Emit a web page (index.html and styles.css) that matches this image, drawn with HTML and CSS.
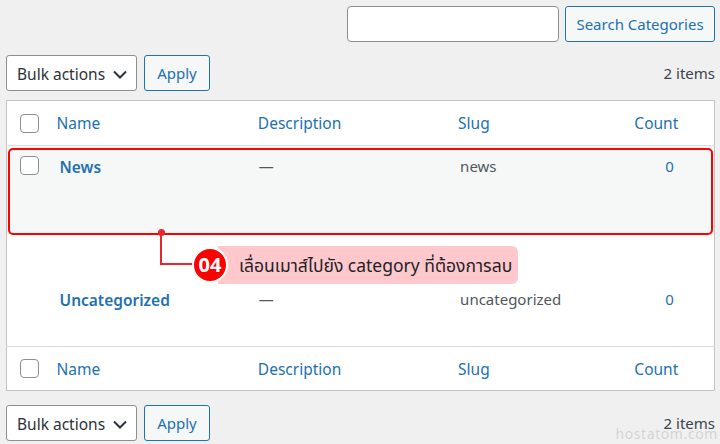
FILE: index.html
```html
<!DOCTYPE html>
<html lang="en">
<head>
<meta charset="utf-8">
<title>Categories</title>
<link rel="stylesheet" href="styles.css">
</head>
<body>
<div class="page">
  <div class="search-row">
    <input class="search-input" type="text" aria-label="Search">
    <button class="btn">Search Categories</button>
  </div>

  <div class="tablenav">
    <div class="select">Bulk actions
      <svg class="chev" width="14" height="14" viewBox="0 0 14 14"><path d="M1 4.5l6 6 6-6" fill="none" stroke="#2c3338" stroke-width="2"/></svg>
    </div>
    <button class="btn apply">Apply</button>
    <span class="count">2 items</span>
  </div>

  <table class="list">
    <colgroup>
      <col class="c-cb"><col class="c-name"><col class="c-desc"><col class="c-slug"><col class="c-count">
    </colgroup>
    <thead>
      <tr class="head">
        <th><span class="cb"></span></th>
        <th class="h">Name</th>
        <th class="h">Description</th>
        <th class="h">Slug</th>
        <th class="h hc">Count</th>
      </tr>
    </thead>
    <tbody>
      <tr class="row r1">
        <td><span class="cb"></span></td>
        <td class="name">News</td>
        <td class="dash">—</td>
        <td class="slug">news</td>
        <td class="num">0</td>
      </tr>
      <tr class="row r2">
        <td></td>
        <td class="name">Uncategorized</td>
        <td class="dash">—</td>
        <td class="slug">uncategorized</td>
        <td class="num">0</td>
      </tr>
    </tbody>
    <tfoot>
      <tr class="foot">
        <th><span class="cb"></span></th>
        <th class="h">Name</th>
        <th class="h">Description</th>
        <th class="h">Slug</th>
        <th class="h hc">Count</th>
      </tr>
    </tfoot>
  </table>

  <div class="tablenav bottom">
    <div class="select">Bulk actions
      <svg class="chev" width="14" height="14" viewBox="0 0 14 14"><path d="M1 4.5l6 6 6-6" fill="none" stroke="#2c3338" stroke-width="2"/></svg>
    </div>
    <button class="btn apply">Apply</button>
    <span class="count">2 items</span>
  </div>

  <div class="highlight"></div>
  <div class="callout">
    <span class="dot"></span>
    <span class="vline"></span>
    <span class="hline"></span>
    <span class="label">เลื่อนเมาส์ไปยัง category ที่ต้องการลบ</span>
    <span class="badge">04</span>
  </div>
  <div class="watermark">hostatom.com</div>
</div>
</body>
</html>
```

FILE: styles.css
```css
* { box-sizing: border-box; }
html, body { margin: 0; }
body {
  background: #f0f0f1;
  font-family: "Noto Sans", "Open Sans", sans-serif;
  font-size: 15px;
  color: #3c434a;
  width: 720px;
  height: 444px;
  overflow: hidden;
}
.page {
  position: relative;
  padding: 6px 5px 0 6px;
  height: 444px;
}
.search-row {
  display: flex;
  justify-content: flex-end;
  gap: 6px;
}
.search-input {
  width: 212px;
  height: 36px;
  border: 1px solid #8c8f94;
  border-radius: 4px;
  background: #fff;
  margin: 0;
}
.btn {
  height: 36px;
  padding: 0 12px;
  border: 1px solid #2271b1;
  border-radius: 3px;
  background: #f6f7f7;
  color: #2271b1;
  font: inherit;
  font-size: 15px;
  margin: 0;
}
.search-row .btn { width: 150px; padding: 0; }
.tablenav {
  display: flex;
  align-items: center;
  margin-top: 13px;
  height: 36px;
}
.select {
  width: 131px;
  height: 36px;
  border: 1px solid #8c8f94;
  border-radius: 3px;
  background: #fff;
  color: #2c3338;
  display: flex;
  align-items: center;
  padding: 1px 0 0 10px;
  gap: 8px;
  font-size: 15.5px;
}
.apply { width: 66px; margin-left: 7px; padding: 0; }
.count { margin-left: auto; color: #3c434a; }
.list {
  margin-top: 9px;
  width: 709px;
  border: 1px solid #c3c4c7;
  border-collapse: collapse;
  background: #fff;
  table-layout: fixed;
}
.c-cb { width: 43px; }
.c-name { width: 201px; }
.c-desc { width: 200px; }
.c-slug { width: 177px; }
.c-count { width: 86px; }
th, td { padding: 0; text-align: left; font-weight: normal; vertical-align: middle; }
.head { height: 45px; border-bottom: 1px solid #dcdcde; }
.foot { height: 44px; border-top: 1px solid #dcdcde; }
.head th:first-child, .foot th:first-child, .row td:first-child { padding-left: 13px; }
.h { color: #2271b1; padding-left: 7px; font-size: 15.5px; }
.hc { padding-left: 6px; }
.cb {
  display: block;
  width: 19px;
  height: 19px;
  border: 1px solid #8c8f94;
  border-radius: 4px;
  background: #fff;
}
.row td { vertical-align: top; }
.r1 { height: 88px; background: #f6f7f7; }
.r1 td { padding-top: 10px; }
.r2 { height: 113px; }
.r2 td { padding-top: 55px; }
.name { color: #2271b1; font-weight: 600 !important; padding-left: 10px; font-size: 15.5px; }
.dash { color: #50575e; padding-left: 8px; }
.slug { color: #50575e; padding-left: 9px; }
.num { color: #2271b1; padding-left: 37px; }
.tablenav.bottom { margin-top: 14px; }
.highlight {
  position: absolute;
  left: 8px;
  top: 148px;
  width: 705px;
  height: 87px;
  border: 2px solid #ff0000;
  border-radius: 5px;
}
.callout { position: absolute; left: 0; top: 0; }
.dot {
  position: absolute;
  left: 158px; top: 229px;
  width: 7px; height: 7px;
  border-radius: 50%;
  background: #e8262e;
}
.vline {
  position: absolute;
  left: 160px; top: 232px;
  width: 2px; height: 33px;
  background: #e8262e;
}
.hline {
  position: absolute;
  left: 160px; top: 263px;
  width: 36px; height: 2px;
  background: #e8262e;
}
.label {
  position: absolute;
  left: 218px; top: 246px;
  width: 300px; height: 38px;
  padding-left: 21px;
  background: #ffc8cd;
  border-radius: 0 6px 6px 0;
  color: #1d2327;
  font-family: "Noto Sans", "Noto Sans Thai", "Noto Sans CJK SC", sans-serif;
  font-size: 17.5px;
  line-height: 38px;
  white-space: nowrap;
}
.badge {
  position: absolute;
  left: 192px; top: 247px;
  width: 36px; height: 36px;
  border-radius: 50%;
  background: #ff0000;
  border: 2px solid #fff;
  color: #fff;
  font-weight: 700;
  font-size: 20px;
  text-align: center;
  line-height: 32px;
}
.watermark {
  position: absolute;
  right: 2px;
  top: 425px;
  font-size: 14px;
  line-height: 18px;
  letter-spacing: 0.6px;
  color: #d4d4d6;
}
```
